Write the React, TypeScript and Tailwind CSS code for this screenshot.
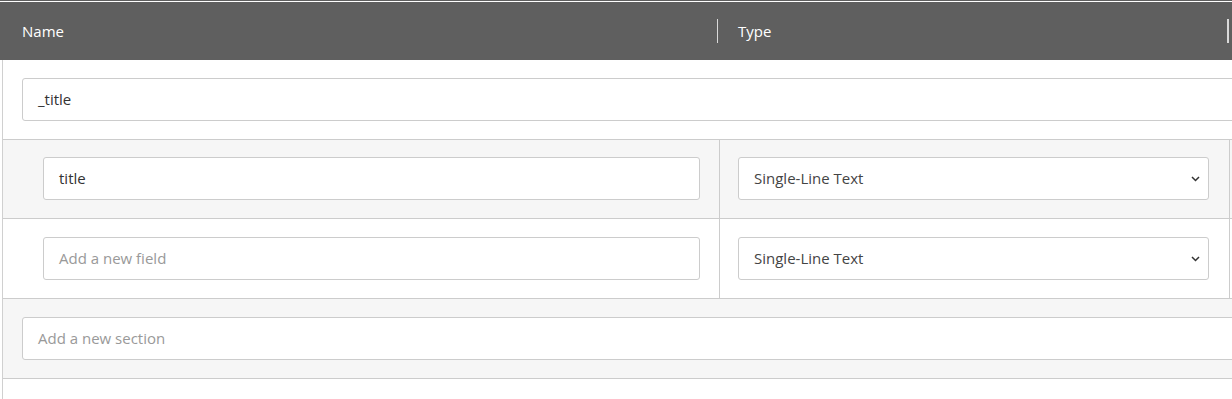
type Field = {
  name: string
  type: string
  placeholder?: boolean
  shaded?: boolean
}

const fields: Field[] = [
  { name: "title", type: "Single-Line Text", shaded: true },
  { name: "Add a new field", type: "Single-Line Text", placeholder: true },
]

function TextBox({ value, placeholder }: { value: string; placeholder?: boolean }) {
  return (
    <div
      className={`flex h-[43px] items-center rounded-[3px] border border-[#cccccc] bg-white px-[15px] ${
        placeholder ? "text-[#999999]" : "text-[#333333]"
      }`}
    >
      {value}
    </div>
  )
}

function SelectBox({ value }: { value: string }) {
  return (
    <div className="flex h-[43px] items-center justify-between rounded-[3px] border border-[#cccccc] bg-white pl-[15px] pr-[8px] text-[#444444]">
      <span>{value}</span>
      <svg width="9" height="6" viewBox="0 0 9 6" className="text-[#333333]">
        <polyline points="1,1 4.5,4.5 8,1" fill="none" stroke="currentColor" strokeWidth="1.5" />
      </svg>
    </div>
  )
}

export default function App() {
  return (
    <div
      className="h-[399px] w-[1232px] overflow-hidden bg-white text-[15px]"
      style={{ fontFamily: '"Open Sans", "Noto Sans", sans-serif' }}
    >
      <div className="w-[1500px]">
        {/* top edge */}
        <div className="h-px bg-[#5f5f5f]" />
        <div className="h-px bg-white" />

        {/* Header */}
        <div className="flex h-[58px] items-center bg-[#5f5f5f] text-white">
          <div className="flex h-6 w-[717px] items-center pl-[22px]">Name</div>
          <div className="flex h-6 w-[510px] items-center border-l border-[#d9d9d9] pl-5">Type</div>
          <div className="h-6 border-l-2 border-[#d9d9d9]" />
        </div>

        {/* Body */}
        <div className="ml-[2px] h-[400px] border-l border-[#d0d0d0]">
          {/* Section row */}
          <div className="border-b border-[#cccccc] bg-white py-[18px] pl-[19px] pr-4">
            <TextBox value="_title" />
          </div>

          {fields.map((field) => (
            <div
              key={field.name}
              className={`flex border-b border-[#cccccc] ${field.shaded ? "bg-[#f6f6f6] pt-[17px]" : "bg-white pt-[18px]"}`}
            >
              <div className="w-[716px] pb-[18px] pl-[40px] pr-[19px]">
                <TextBox value={field.name} placeholder={field.placeholder} />
              </div>
              <div className="-mt-[18px] w-[510px] border-l border-[#cccccc] pb-[18px] pl-[18px] pr-[20px] pt-[18px]">
                <SelectBox value={field.type} />
              </div>
              <div className="-mt-[18px] flex-1 border-l border-[#cccccc]" />
            </div>
          ))}

          {/* New section row */}
          <div className="border-b border-[#cccccc] bg-[#f6f6f6] py-[18px] pl-[19px] pr-4">
            <TextBox value="Add a new section" placeholder />
          </div>
        </div>
      </div>
    </div>
  )
}
